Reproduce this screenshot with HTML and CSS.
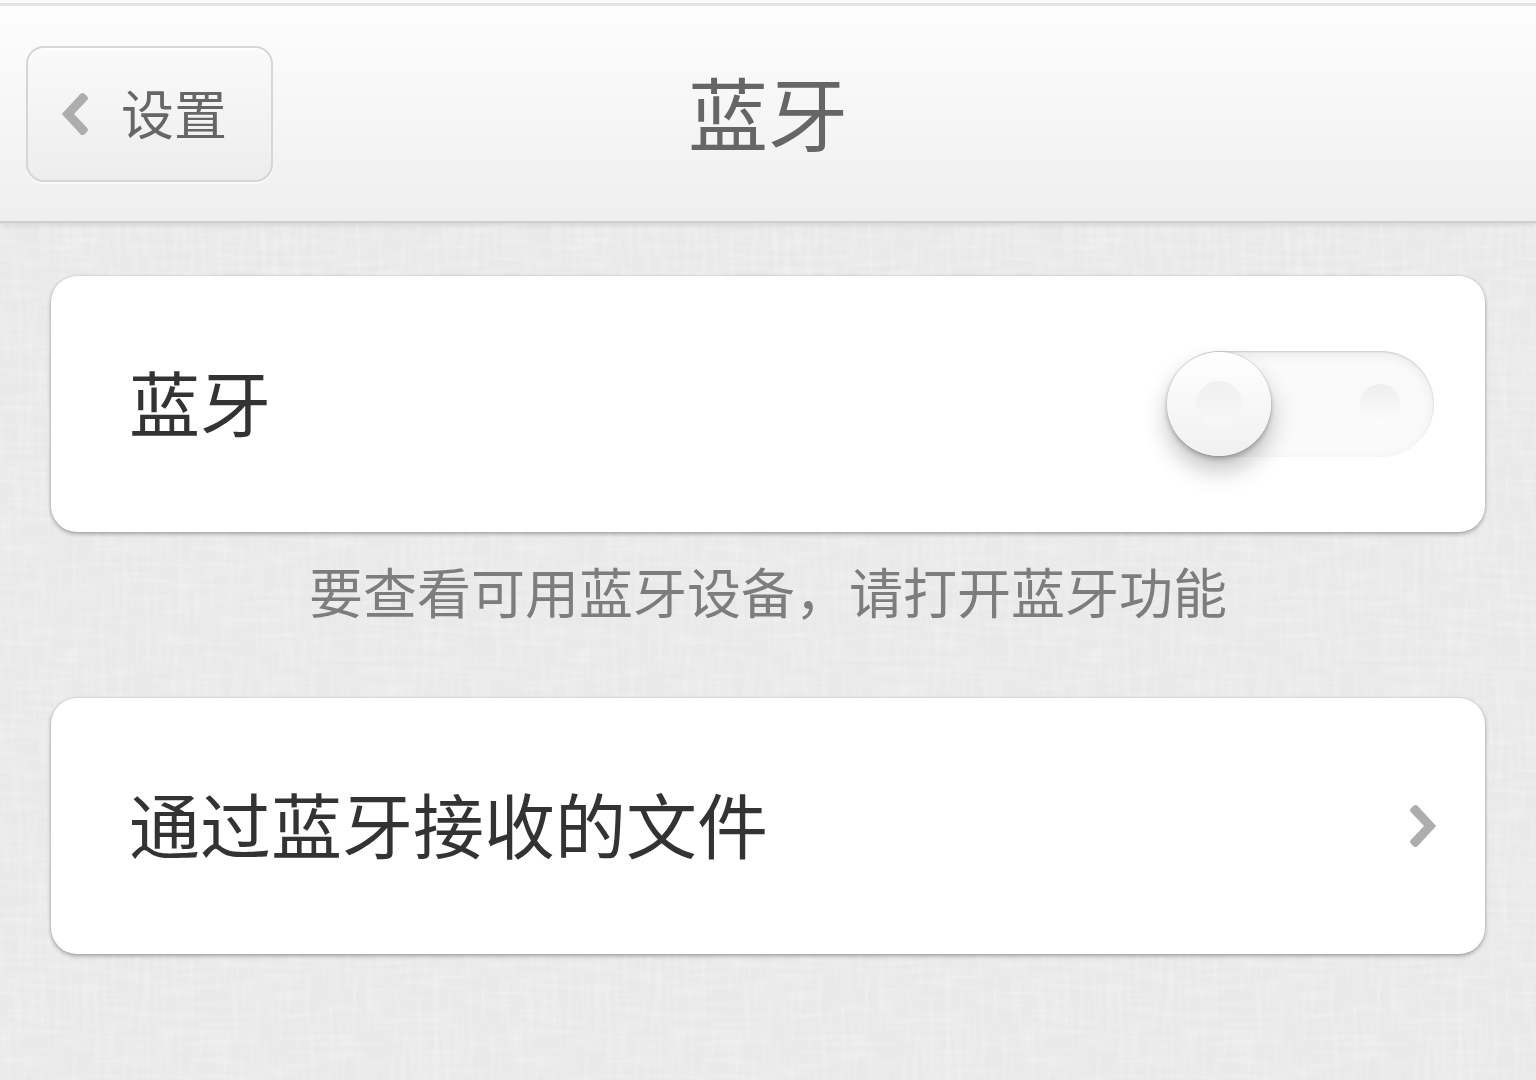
FILE: index.html
```
<!DOCTYPE html>
<html lang="zh-CN">

<head>
  <meta charset="UTF-8">
  <meta name="viewport" content="width=device-width, initial-scale=1.0">
  <title>蓝牙</title>
  <link rel="stylesheet" href="styles.css">
</head>
<body>

  <header class="topbar">
    <a class="back" href="#">
      <svg class="chevron" viewBox="0 0 28 44" aria-hidden="true">
        <path d="M0.8 22 L19.5 1.8 Q21.5 0 23.5 1.8 L26 4.2 Q28 6.2 26 8.2 L13 22 L26 35.8 Q28 37.8 26 39.8 L23.5 42.2 Q21.5 44 19.5 42.2 Z"/>
      </svg>
      <span>设置</span>
    </a>
    <h1>蓝牙</h1>
  </header>

  <main>
    <div class="card">
      <label class="title" for="bluetooth">蓝牙</label>
      <div class="switch">
        <input type="checkbox" id="bluetooth" role="switch">
        <span class="dot"></span>
        <span class="knob"></span>
      </div>
    </div>

    <p class="hint">要查看可用蓝牙设备，请打开蓝牙功能</p>

    <a class="card link" href="#">
      <span class="title">通过蓝牙接收的文件</span>
      <svg class="chevron right" viewBox="0 0 28 44" aria-hidden="true">
        <path d="M0.8 22 L19.5 1.8 Q21.5 0 23.5 1.8 L26 4.2 Q28 6.2 26 8.2 L13 22 L26 35.8 Q28 37.8 26 39.8 L23.5 42.2 Q21.5 44 19.5 42.2 Z"/>
      </svg>
    </a>
  </main>

</body>
</html>
```

FILE: styles.css
```
* {
  box-sizing: border-box;
  margin: 0;
  padding: 0;
}

body {
  min-height: 100vh;
  font-family: "Noto Sans CJK SC", sans-serif;
  background-color: #e9e9e9;
  /* linen texture */
  background-image: url("data:image/svg+xml,%3Csvg xmlns='http://www.w3.org/2000/svg' width='512' height='512'%3E%3Cfilter id='h' x='0' y='0' width='100%25' height='100%25'%3E%3CfeTurbulence type='fractalNoise' baseFrequency='.02 .18' numOctaves='2' seed='3' stitchTiles='stitch'/%3E%3CfeColorMatrix values='0 0 0 0 1 0 0 0 0 1 0 0 0 0 1 1.4 0 0 0 -.6'/%3E%3C/filter%3E%3Cfilter id='v' x='0' y='0' width='100%25' height='100%25'%3E%3CfeTurbulence type='fractalNoise' baseFrequency='.18 .02' numOctaves='2' seed='8' stitchTiles='stitch'/%3E%3CfeColorMatrix values='0 0 0 0 1 0 0 0 0 1 0 0 0 0 1 1.4 0 0 0 -.6'/%3E%3C/filter%3E%3Crect width='512' height='512' filter='url(%23h)' opacity='.35'/%3E%3Crect width='512' height='512' filter='url(%23v)' opacity='.35'/%3E%3C/svg%3E");
}

a {
  color: inherit;
  text-decoration: none;
}

.topbar {
  display: grid;
  grid-template-columns: 1fr auto 1fr;
  align-items: center;
  height: 223px;
  padding: 3px 26px 0;
  border-top: 3px solid #fafafa;
  border-bottom: 2px solid #cfcfcf;
  background: linear-gradient(#e4e4e4 3px, #fdfdfd 3px, #efefef);
  box-shadow: 0 2px 6px rgba(0, 0, 0, 0.1);
}

.topbar h1 {
  padding-bottom: 8px;
  color: #666;
  font-size: 80px;
  font-weight: 400;
  line-height: 100px;
}

.back {
  display: flex;
  align-items: center;
  justify-self: start;
  gap: 32px;
  height: 136px;
  padding: 0 44px 0 33px;
  border: 2px solid #d6d6d6;
  border-radius: 18px;
  background: linear-gradient(#fafafa, #ededed);
  box-shadow: 0 2px 1px #fafafa, inset 0 2px 1px #fff;
  color: #666;
  font-size: 53px;
}

.back span {
  padding-bottom: 4px;
}

.chevron {
  flex: none;
  width: 28px;
  height: 44px;
  fill: #adadad;
}

.chevron.right {
  transform: rotate(180deg);
}

main {
  padding: 53px 51px;
}

.card {
  display: flex;
  align-items: center;
  justify-content: space-between;
  height: 256px;
  padding: 0 51px 0 78px;
  border-radius: 26px;
  background-color: #fff;
  box-shadow: 0 0 2px rgba(0, 0, 0, 0.15), 0 2px 4px rgba(0, 0, 0, 0.3);
  color: #333;
  font-size: 71px;
}

.card.link {
  padding-right: 48px;
}

.title {
  padding-bottom: 8px;
}

.hint {
  padding: 19px 0 67px;
  color: #7d7d7d;
  font-size: 54px;
  line-height: 80px;
  text-align: center;
}

.switch {
  display: grid;
  align-items: center;
  width: 267px;
}

.switch > * {
  grid-area: 1 / 1;
}

.switch input {
  appearance: none;
  width: 100%;
  height: 106px;
  border-radius: 53px;
  background: linear-gradient(#fbfbfb, #f9f9f9 50%, #fafafa);
  box-shadow: inset 0 1px 2px rgba(0, 0, 0, 0.14), inset 0 4px 12px rgba(0, 0, 0, 0.07);
  cursor: pointer;
}

.dot {
  justify-self: end;
  width: 40px;
  height: 40px;
  margin-right: 34px;
  border-radius: 50%;
  background: linear-gradient(#eee, #f5f5f5 50%, #fcfcfc);
  pointer-events: none;
}

.knob {
  display: grid;
  place-items: center;
  width: 104px;
  height: 104px;
  border-radius: 50%;
  background: linear-gradient(#fff, #f0f0f0);
  box-shadow: 0 0 2px rgba(0, 0, 0, 0.2), 0 3px 5px rgba(0, 0, 0, 0.22), 0 14px 24px rgba(0, 0, 0, 0.24);
  pointer-events: none;
}

.knob::before {
  content: "";
  width: 46px;
  height: 46px;
  border-radius: 50%;
  background: linear-gradient(#f0f0f0, #f8f8f8);
}

.switch input:checked ~ .knob {
  justify-self: end;
}

.switch input:checked ~ .dot {
  justify-self: start;
  margin-left: 34px;
}
```
